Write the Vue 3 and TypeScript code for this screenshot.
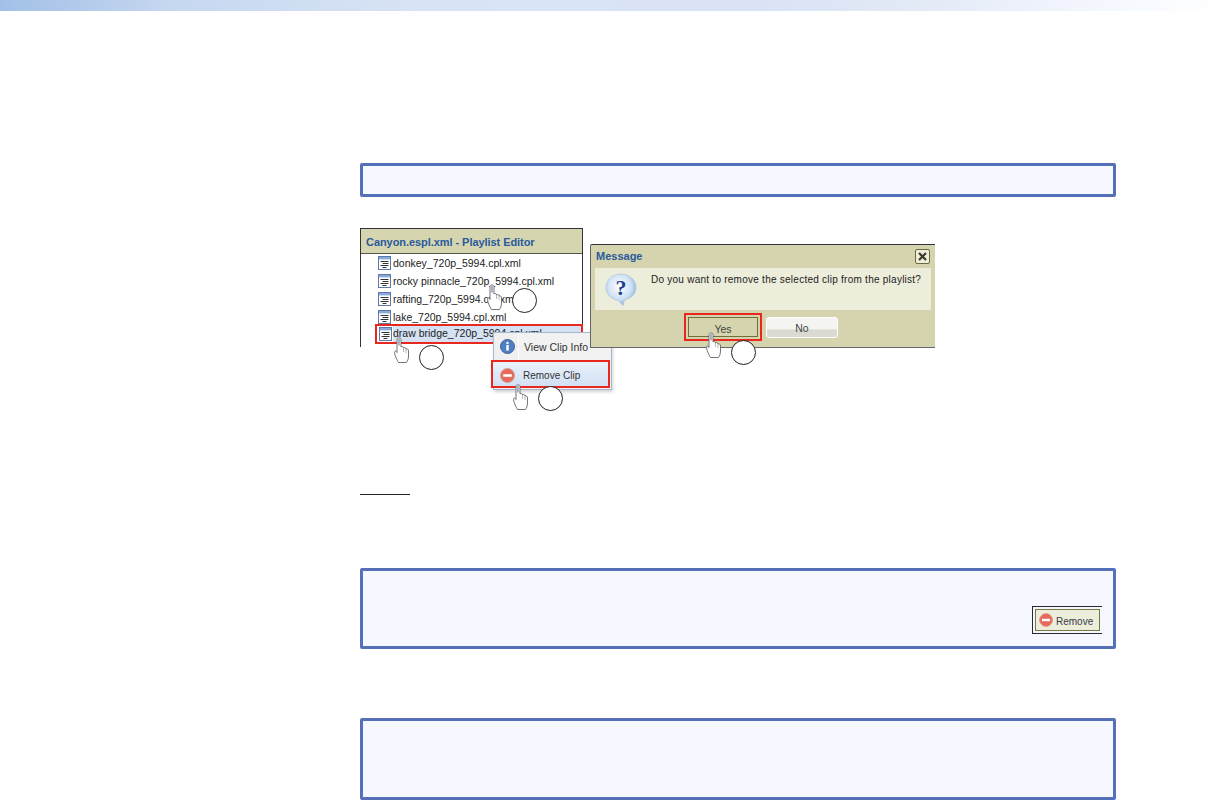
<script setup lang="ts">
interface Hand { id: string; x: number; y: number }
interface Callout { id: string; x: number; y: number }

const rows: string[] = [
  'donkey_720p_5994.cpl.xml',
  'rocky pinnacle_720p_5994.cpl.xml',
  'rafting_720p_5994.cpl.xml',
  'lake_720p_5994.cpl.xml',
  'draw bridge_720p_5994.cpl.xml',
]
const hands: Hand[] = [
  { id: 'a', x: 127, y: 56 },
  { id: 'b', x: 34, y: 109 },
  { id: 'c', x: 153, y: 156 },
  { id: 'd', x: 346, y: 104 },
]
const callouts: Callout[] = [
  { id: 'a', x: 152, y: 60 },
  { id: 'b', x: 59, y: 117 },
  { id: 'c', x: 178, y: 158 },
  { id: 'd', x: 371, y: 112 },
]
</script>

<template>
  <div class="page">
    <div class="topbar"></div>
    <main class="content">
      <div class="note note-one"></div>

      <section class="figure">
        <div class="shots">
          <div class="panel">
            <div class="panel-title">Canyon.espl.xml - Playlist Editor</div>
            <ul class="rows">
              <li v-for="(name, i) in rows" :key="name" class="row" :class="{ selected: i === rows.length - 1 }">
                <svg class="doc" width="13" height="14" viewBox="0 0 13 14">
                  <rect x="0.5" y="0.5" width="12" height="13" fill="#fff" stroke="#5a78a8" />
                  <rect x="1" y="1" width="11" height="2.4" fill="#8aa8d8" />
                  <path d="M2.5 5.5h8M4.5 7.5h6M2.5 9.5h8M4.5 11.5h4" stroke="#333" stroke-width="1" fill="none" />
                </svg>
                <span class="row-name">{{ name }}</span>
              </li>
            </ul>
          </div>

          <div class="dialog">
            <div class="dialog-head">
              <span class="dialog-title">Message</span>
              <span class="close">
                <svg width="11" height="11" viewBox="0 0 11 11">
                  <path d="M2 2l7 7M9 2l-7 7" stroke="#3c3c28" stroke-width="2.2" fill="none" />
                </svg>
              </span>
            </div>
            <div class="dialog-body">
              <svg class="question" width="32" height="33" viewBox="0 0 32 33">
                <defs>
                  <radialGradient id="bubble" cx="45%" cy="40%" r="65%">
                    <stop offset="0" stop-color="#ffffff" />
                    <stop offset="0.6" stop-color="#cfe2f6" />
                    <stop offset="1" stop-color="#7fa6d4" />
                  </radialGradient>
                </defs>
                <path d="M16 1C7.5 1 1 7 1 14.5 1 21 6 26 13 27.3L18 32.5 19.5 27C26.5 25.5 31 20.5 31 14.5 31 7 24.5 1 16 1Z" fill="url(#bubble)" stroke="#a8bdd6" stroke-width="0.6" />
                <text x="16" y="22" text-anchor="middle" class="qmark">?</text>
              </svg>
              <span class="dialog-text">Do you want to remove the selected clip from the playlist?</span>
            </div>
            <div class="dialog-actions">
              <span class="btn-ring"><button class="btn btn-yes" type="button">Yes</button></span>
              <button class="btn btn-no" type="button">No</button>
            </div>
          </div>
        </div>

        <div class="menu">
          <div class="menu-item">
            <svg width="15" height="15" viewBox="0 0 15 15">
              <circle cx="7.5" cy="7.5" r="7" fill="#4f7fc0" stroke="#3a62a0" />
              <circle cx="7.5" cy="4" r="1.2" fill="#fff" />
              <rect x="6.3" y="6" width="2.4" height="5.6" fill="#fff" />
            </svg>
            <span>View Clip Info</span>
          </div>
          <div class="menu-item menu-remove">
            <svg width="15" height="15" viewBox="0 0 15 15">
              <circle cx="7.5" cy="7.5" r="7" fill="#e8685c" stroke="#d0a090" />
              <rect x="3.2" y="6.2" width="8.6" height="2.6" fill="#fff" />
            </svg>
            <span>Remove Clip</span>
          </div>
        </div>

        <svg
          v-for="h in hands"
          :key="h.id"
          class="hand"
          :style="{ left: h.x + 'px', top: h.y + 'px' }"
          width="15"
          height="26"
          viewBox="0 0 15 26"
        >
          <path
            d="M3 2.5C3 .3 7 .3 7 2.5V10C8 9 9.5 9.5 9.5 11 10.5 10 12 10.5 12 12 13 11.5 14.5 12 14.5 14V19C14.5 22 13.5 24 12.5 25.5H4.5C3 23 1 19 .6 16 .4 13.5 2 13.5 3 15.5Z"
            fill="#fff"
            stroke="#666"
            stroke-width="0.9"
          />
          <path d="M9.5 11v4M12 12v4" stroke="#999" stroke-width="0.7" fill="none" />
          <rect x="4" y="1.5" width="2" height="7" fill="#a8b4c6" />
        </svg>

        <span
          v-for="c in callouts"
          :key="c.id"
          class="callout"
          :style="{ left: c.x + 'px', top: c.y + 'px' }"
        ></span>
      </section>

      <div class="rule"></div>

      <div class="note note-two">
        <div class="remove-chip">
          <span class="remove-inner">
            <svg width="14" height="14" viewBox="0 0 14 14">
              <circle cx="7" cy="7" r="6.4" fill="#e8685c" stroke="#d89a8c" />
              <rect x="3" y="5.8" width="8" height="2.4" fill="#fff" />
            </svg>
            <span class="remove-label">Remove</span>
          </span>
        </div>
      </div>

      <div class="note note-three"></div>
    </main>
  </div>
</template>

<style scoped>
.page {
  width: 1224px;
  height: 801px;
  overflow: hidden;
  background: #fff;
  font-family: "Liberation Sans", Arial, sans-serif;
}
.topbar {
  height: 11px;
  background: linear-gradient(90deg, #a2c0e7 0%, #c6d7f0 14%, #d8e4f5 34%, #dae3f5 62%, #e2eaf6 75%, #f0f3fc 86%, #f8fbff 94%, #ffffff 100%);
}
.content {
  width: 756px;
  margin-left: 360px;
  padding-top: 152px;
}
.note {
  box-sizing: border-box;
  width: 756px;
  border: 3px solid #5570b8;
  border-radius: 2px;
  background: #f5f9ff;
}
.note-one {
  height: 34px;
}
.figure {
  position: relative;
  height: 266px;
  margin-top: 31px;
}
.shots {
  display: flex;
  gap: 7px;
  align-items: flex-start;
}
.panel {
  box-sizing: border-box;
  width: 223px;
  height: 119px;
  border: 1px solid #333;
  border-bottom: 0;
  background: #fff;
}
.panel-title {
  box-sizing: border-box;
  height: 25px;
  padding-left: 5px;
  border-bottom: 1px solid #555;
  background: #d5d5b0;
  color: #2a5a9c;
  font-size: 11px;
  font-weight: 700;
  letter-spacing: -0.06px;
  line-height: 26px;
}
.rows {
  margin: 0;
  padding: 0;
  list-style: none;
}
.row {
  display: flex;
  align-items: center;
  gap: 1px;
  height: 18px;
  margin-left: 17px;
  color: #222;
  font-size: 10.5px;
}
.row.selected {
  height: 16px;
  margin-left: 16px;
  margin-right: 1px;
  padding-left: 2px;
  outline: 2px solid #e8281f;
}
.row.selected .row-name {
  flex: 1;
  height: 16px;
  margin-left: -1px;
  background: #d4e2f4;
  line-height: 14px;
}
.doc {
  flex: none;
  margin-right: 1px;
}
.dialog {
  position: relative;
  z-index: 2;
  box-sizing: border-box;
  width: 345px;
  height: 104px;
  margin-top: 16px;
  border: 1px solid #666;
  border-top-color: #333;
  border-right: 0;
  border-radius: 2px 0 0 0;
  background: #d5d4ae;
}
.dialog-head {
  display: flex;
  align-items: center;
  justify-content: space-between;
  height: 23px;
  padding: 0 5px;
}
.dialog-title {
  margin-top: -2px;
  color: #2a5a9c;
  font-size: 11px;
  font-weight: 700;
}
.close {
  display: flex;
  align-items: center;
  justify-content: center;
  box-sizing: border-box;
  width: 15px;
  height: 15px;
  border: 1px solid #6a6a3c;
  border-radius: 2px;
  background: #ecedda;
}
.dialog-body {
  display: flex;
  align-items: flex-start;
  height: 42px;
  margin-left: 4px;
  margin-right: 4px;
  background: #ecedda;
}
.question {
  flex: none;
  margin: 5px 0 0 10px;
}
.qmark {
  fill: #1f3f8f;
  font-family: "Liberation Serif", serif;
  font-size: 22px;
  font-weight: 700;
}
.dialog-text {
  margin: 6px 0 0 14px;
  color: #222;
  font-size: 10px;
  letter-spacing: 0.25px;
  line-height: 12px;
  white-space: nowrap;
}
.dialog-actions {
  display: flex;
  align-items: center;
  gap: 4px;
  margin: 3px 0 0 93px;
}
.btn-ring {
  display: flex;
  box-sizing: border-box;
  width: 78px;
  height: 28px;
  padding: 2px;
  border: 2px solid #e8281f;
}
.btn {
  padding: 0;
  color: #444;
  font-family: inherit;
  font-size: 10.5px;
}
.btn-yes {
  width: 100%;
  padding-top: 3px;
  border: 1px solid #6f6f3c;
  background: #d5d4ae;
}
.btn-no {
  width: 72px;
  height: 21px;
  padding-top: 2px;
  border: 1px solid #fff;
  border-radius: 3px;
  background: linear-gradient(180deg, #f4f4f0 0%, #f4f4f0 60%, #d8d8d0 61%, #dcdcd4 100%);
}
.menu {
  position: absolute;
  z-index: 1;
  left: 133px;
  top: 104px;
  box-sizing: border-box;
  width: 119px;
  height: 58px;
  border: 1px solid #a8b8cc;
  background: linear-gradient(90deg, #f0f0f0 0, #f0f0f0 24px, #fff 24px, #fff 25px, #f2f2f2 25px);
  box-shadow: 1px 2px 3px rgba(0, 0, 0, 0.18);
}
.menu-item {
  display: flex;
  align-items: center;
  gap: 9px;
  height: 27px;
  padding-left: 6px;
  color: #333;
  font-size: 10.5px;
  white-space: nowrap;
}
.menu-remove {
  box-sizing: border-box;
  width: 119px;
  height: 28px;
  margin: 0 0 0 -3px;
  padding-left: 7px;
  padding-top: 2px;
  border: 2px solid #e8281f;
  background: linear-gradient(180deg, #eaf1fb 0%, #d2e0f3 100%);
  font-size: 10px;
  gap: 8px;
}
.hand {
  position: absolute;
  z-index: 3;
}
.callout {
  position: absolute;
  z-index: 3;
  box-sizing: border-box;
  width: 25px;
  height: 25px;
  border: 1px solid #222;
  border-radius: 50%;
  background: #fff;
}
.rule {
  width: 50px;
  height: 1px;
  border-top: 1px solid #222;
}
.note-two {
  display: flex;
  justify-content: flex-end;
  height: 81px;
  margin-top: 72px;
  padding: 35px 11px 0 0;
}
.remove-chip {
  box-sizing: border-box;
  width: 70px;
  height: 28px;
  padding: 2px 0 2px 2px;
  border: 1px solid #2a2a2a;
  border-right: 0;
}
.remove-inner {
  display: flex;
  align-items: center;
  gap: 3px;
  box-sizing: border-box;
  width: 65px;
  height: 22px;
  padding-left: 3px;
  border: 1px solid #77773f;
  background: #ecedda;
  color: #3a3a4a;
  font-size: 10px;
}
.remove-label {
  padding-top: 2px;
}
.note-three {
  height: 82px;
  margin-top: 69px;
}
</style>
